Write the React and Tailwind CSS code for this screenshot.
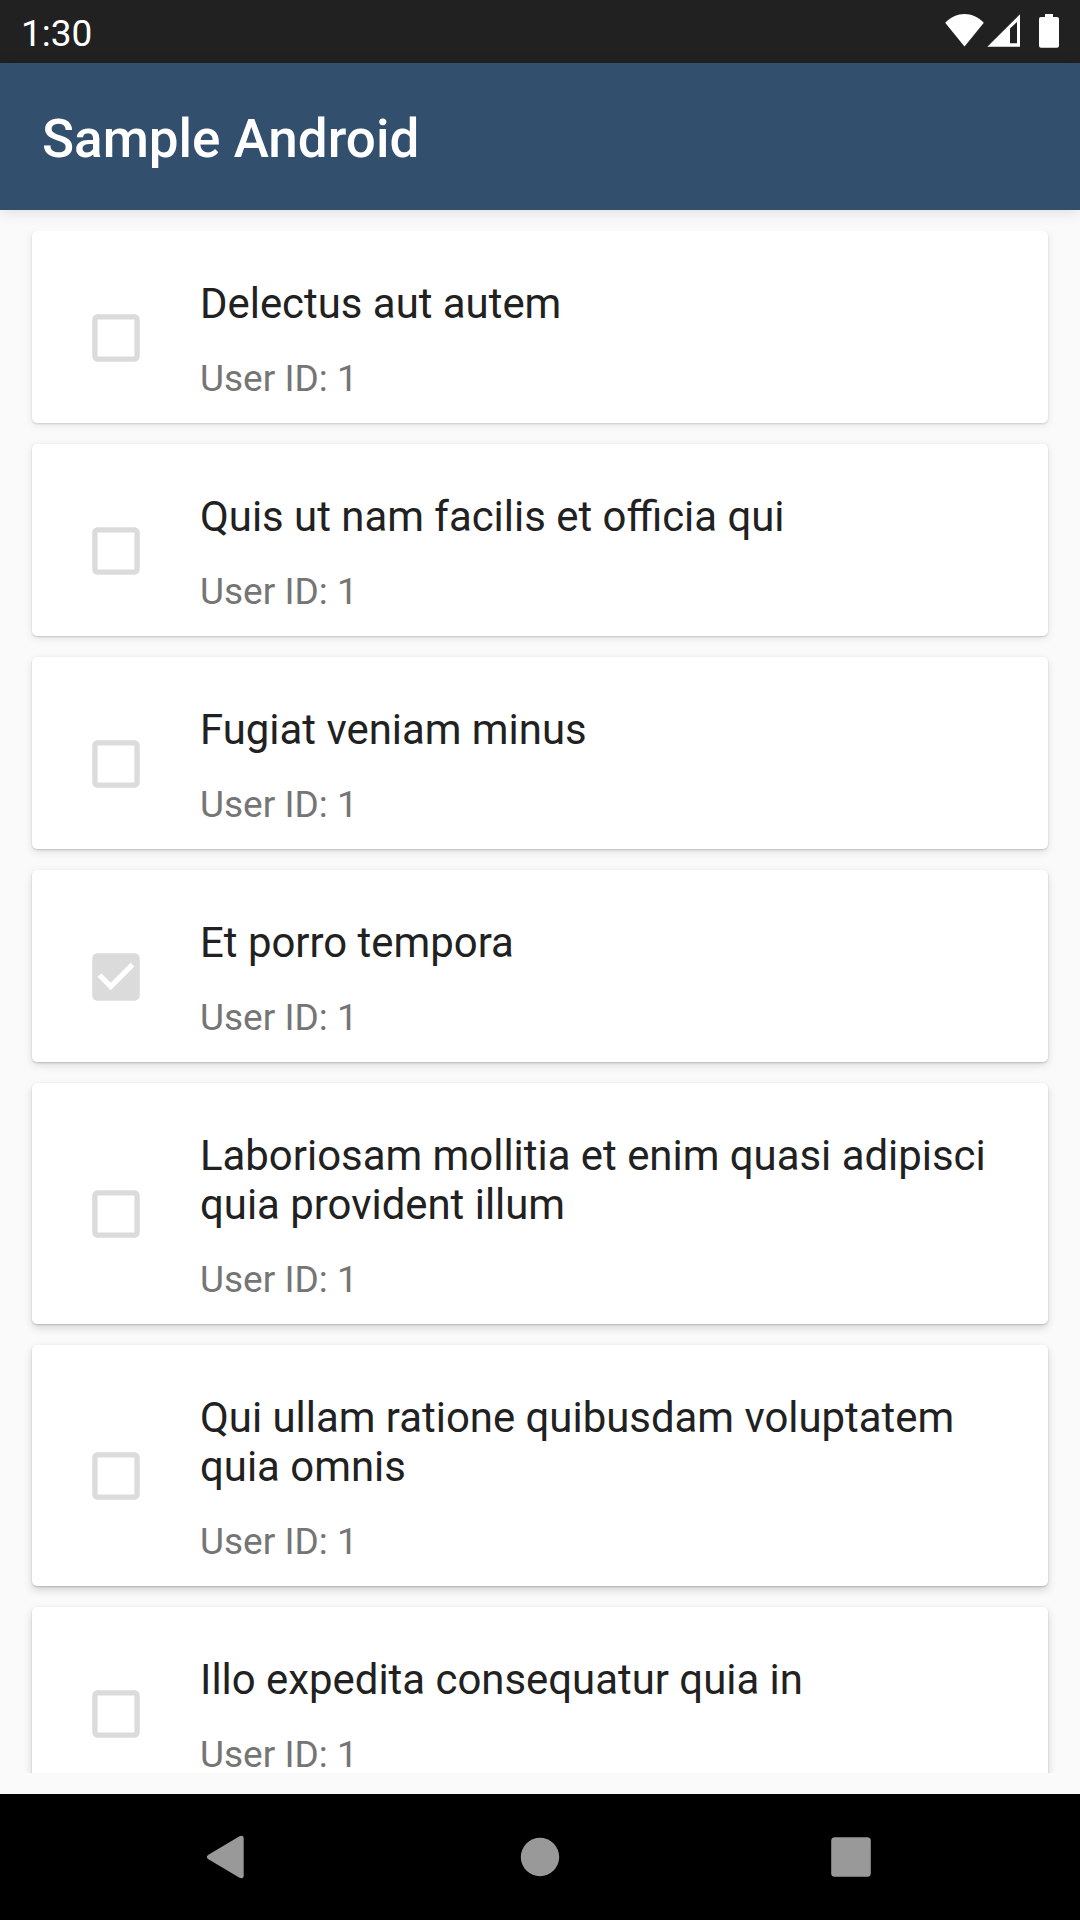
const TODOS = [
  { title: "Delectus aut autem", shadow: "shadow-[0_1px_2px_rgba(0,0,0,0.14),0_2px_8px_rgba(0,0,0,0.09)]" },
  { title: "Quis ut nam facilis et officia qui", shadow: "shadow-[0_1px_2px_rgba(0,0,0,0.16),0_2px_8px_rgba(0,0,0,0.10)]" },
  { title: "Fugiat veniam minus", shadow: "shadow-[0_1px_2px_rgba(0,0,0,0.17),0_3px_8px_rgba(0,0,0,0.11)]" },
  { title: "Et porro tempora", done: true, shadow: "shadow-[0_1px_2px_rgba(0,0,0,0.18),0_3px_8px_rgba(0,0,0,0.13)]" },
  { title: "Laboriosam mollitia et enim quasi adipisci quia provident illum", shadow: "shadow-[0_1px_2px_rgba(0,0,0,0.18),0_4px_8px_rgba(0,0,0,0.14)]" },
  { title: "Qui ullam ratione quibusdam voluptatem quia omnis", shadow: "shadow-[0_1px_2px_rgba(0,0,0,0.18),0_4px_8px_rgba(0,0,0,0.16)]" },
  { title: "Illo expedita consequatur quia in", shadow: "shadow-[0_1px_2px_rgba(0,0,0,0.18),0_4px_8px_rgba(0,0,0,0.16)]" },
];

function StatusBar() {
  return (
    <div className="flex h-[63px] shrink-0 items-start justify-between bg-[#212121] px-[21px] text-white">
      <span className="pt-3 text-[37px] leading-[43px]">1:30</span>
      <svg width="114" height="34" viewBox="945 14 114 34" className="mt-[14px]" fill="#fff">
        <path d="M945.2 22.8C950.6 17 957.5 14 964.5 14s13.9 3 19.3 8.8L964.5 46.5z" />
        <path fillRule="evenodd" d="M987.3 46.8L1020 14.3v32.5zM1010 28.500v14.800h7V22z" />
        <path d="M1045 14h8v3h4a2 2 0 0 1 2 2v26.800a2 2 0 0 1-2 2h-16a2 2 0 0 1-2-2V19a2 2 0 0 1 2-2h4z" />
      </svg>
    </div>
  );
}

function Checkbox({ checked }) {
  return (
    <svg width="64" height="64" viewBox="-0.15 -0.15 24.3 24.3" className="mt-[21.6px] shrink-0" fill="#dbdbdb">
      {checked ? (
        <path d="M19 3H5c-1.110 0-2 .9-2 2v14c0 1.100.890 2 2 2h14c1.110 0 2-.9 2-2V5c0-1.100-.890-2-2-2zm-9 14l-5-5 1.410-1.410L10 14.170l7.590-7.590L19 8l-9 9z" />
      ) : (
        <path d="M19 5v14H5V5h14m0-2H5c-1.100 0-2 .9-2 2v14c0 1.100.9 2 2 2h14c1.100 0 2-.9 2-2V5c0-1.100-.9-2-2-2z" />
      )}
    </svg>
  );
}

function TodoCard({ title, done, shadow }) {
  return (
    <div className={`flex shrink-0 items-center rounded-[5px] bg-white pb-[23px] pl-[52px] pr-[42px] pt-[48px] ${shadow}`}>
      <div className="-mb-[23px] -mt-[48px] flex">
        <Checkbox checked={done} />
      </div>
      <div className="ml-[52px] flex-1">
        <div className="text-[41.9px] leading-[49px] text-[#212121]">{title}</div>
        <div className="mt-[30px] text-[37px] leading-[42px] text-[#757575]">User ID: 1</div>
      </div>
    </div>
  );
}

function NavigationBar() {
  return (
    <div className="flex h-[126px] shrink-0 items-center justify-center gap-[248px] bg-black">
      <svg width="64" height="64" viewBox="0 0 64 64" fill="#999">
        <path d="M12 30L43.500 11.200Q47.700 9.600 47.700 13.500v37q0 3.900-4.200 2.300L12 34q-2.400-2 0-4z" />
      </svg>
      <svg width="64" height="64" viewBox="0 0 64 64" fill="#999">
        <circle cx="32" cy="32" r="19.200" />
      </svg>
      <svg width="64" height="64" viewBox="0 0 64 64" fill="#999">
        <rect x="11.200" y="12.200" width="39.600" height="39.600" rx="3.500" />
      </svg>
    </div>
  );
}

export default function App() {
  return (
    <div className="flex h-[1920px] w-[1080px] flex-col overflow-hidden bg-[#fafafa] font-['Roboto',sans-serif]">
      <StatusBar />
      <header className="h-[147px] shrink-0 bg-[#324f6e] pl-[42px] pt-[45px] shadow-[0_2px_14px_rgba(0,0,0,0.12)]">
        <h1 className="text-[53px] font-medium leading-[62px] text-white">Sample Android</h1>
      </header>
      <main className="my-[21px] flex h-[1542px] shrink-0 flex-col gap-[21px] overflow-hidden px-8">
        {TODOS.map((todo) => (
          <TodoCard key={todo.title} {...todo} />
        ))}
      </main>
      <NavigationBar />
    </div>
  );
}
